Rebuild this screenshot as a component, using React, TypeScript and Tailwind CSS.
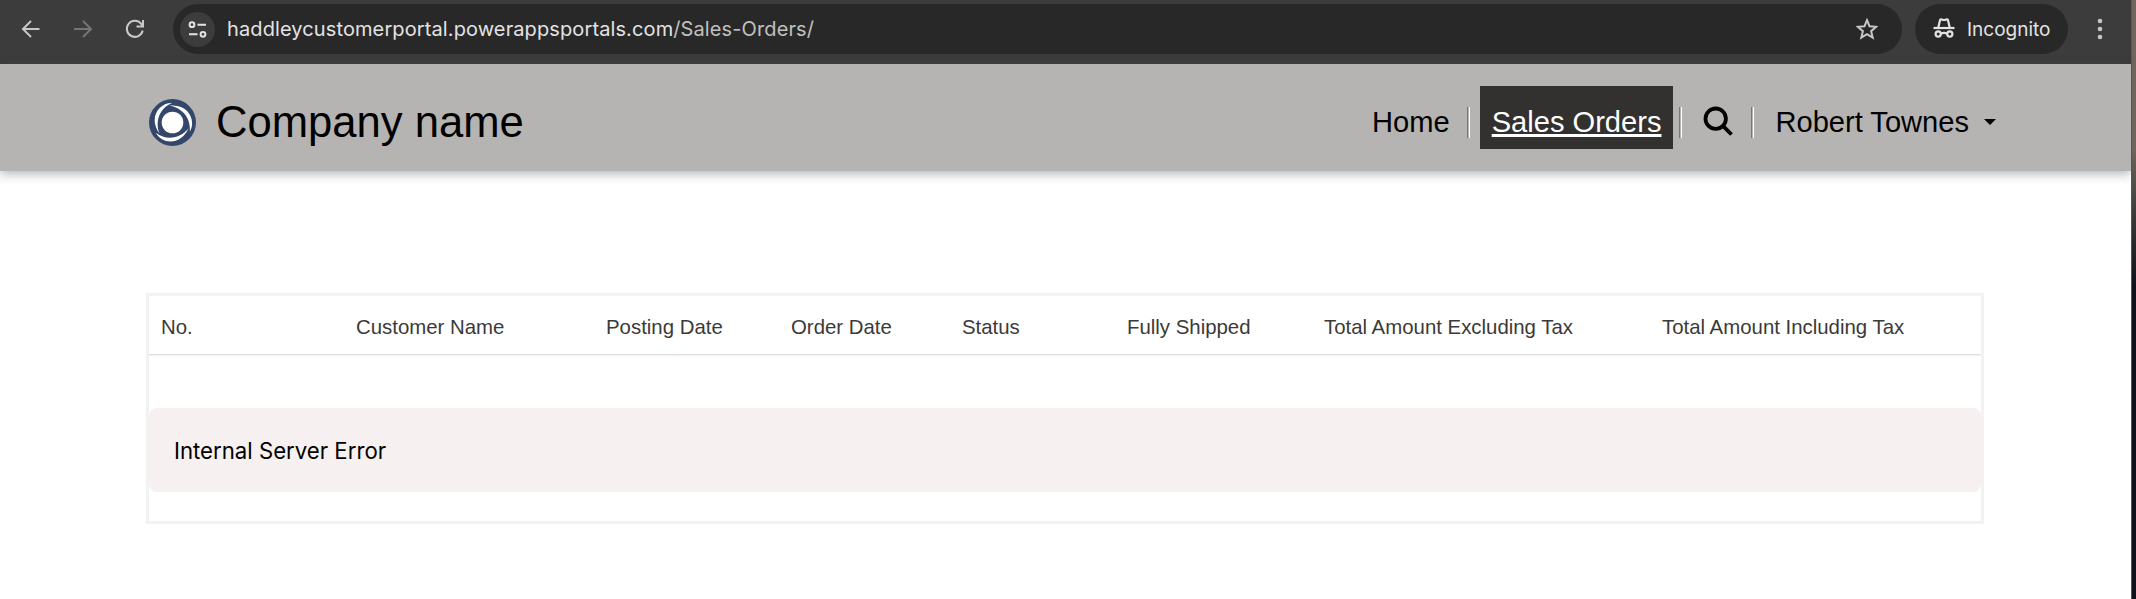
import React from "react";

const columns = [
  { label: "No.", width: "w-[195px]" },
  { label: "Customer Name", width: "w-[250px]" },
  { label: "Posting Date", width: "w-[185px]" },
  { label: "Order Date", width: "w-[171px]" },
  { label: "Status", width: "w-[165px]" },
  { label: "Fully Shipped", width: "w-[197px]" },
  { label: "Total Amount Excluding Tax", width: "w-[338px]" },
  { label: "Total Amount Including Tax", width: "flex-1" },
];

function Toolbar() {
  return (
    <div className="flex h-16 shrink-0 items-start bg-[#3c3c3c] pt-1 font-['Inter',sans-serif]">
      <div className="flex h-[50px] w-[173px] shrink-0 items-center pl-[21px]">
        <svg width="20" height="20" viewBox="0 0 20 20" fill="none" stroke="#c7c7c7" strokeWidth="2">
          <path d="M18.5 10H2.5M10 2L2 10l8 8" />
        </svg>
        <svg className="ml-8" width="20" height="20" viewBox="0 0 20 20" fill="none" stroke="#757575" strokeWidth="2">
          <path d="M1 10h16.5M10 2l8 8-8 8" />
        </svg>
        <svg className="ml-8" width="20" height="20" viewBox="0 0 20 20" fill="none" stroke="#c7c7c7" strokeWidth="2">
          <path d="M17.7 11.5A8 8 0 1 1 16.4 5.2L18 7M18 1v6.500h-6.500" />
        </svg>
      </div>
      <div className="flex h-[50px] w-[1729px] shrink-0 items-center rounded-full bg-[#282828] pl-[7px] pr-6">
        <div className="flex size-[35px] items-center justify-center rounded-full bg-[#3c3c3c]">
          <svg width="19" height="17" viewBox="0 0 19 17" fill="none" stroke="#e3e3e3" strokeWidth="2">
            <circle cx="4" cy="3.7" r="2.4" />
            <path d="M9.5 3.7H18M1 13.3h8.5" />
            <circle cx="15" cy="13.3" r="2.4" />
          </svg>
        </div>
        <div className="ml-3 whitespace-nowrap text-[20px] leading-none tracking-[0.11px] text-[#e3e3e3]">
          haddleycustomerportal.powerappsportals.com<span className="text-[#c0c0c0]">/Sales-Orders/</span>
        </div>
        <svg className="ml-auto" width="22" height="22" viewBox="0 0 22 22" fill="none" stroke="#c7c7c7" strokeWidth="2">
          <path d="M11 2.200l2.500 6 6.700.55-5.100 4.400 1.600 6.450L11 16.200l-5.700 3.400 1.600-6.450L1.800 8.750l6.700-.55z" />
        </svg>
      </div>
      <div className="ml-[13px] flex h-[50px] w-[153px] shrink-0 items-center rounded-full bg-[#282828] pl-[18px]">
        <svg className="-mt-0.5" width="22" height="20" viewBox="0 0 22 20" fill="none" stroke="#e3e3e3" strokeWidth="2.2">
          <path d="M.5 10h21" />
          <path d="M5.3 9.5L7 2.2c.2-.8.8-1.1 1.500-.8l1.600.6h1.800l1.600-.6c.7-.3 1.300 0 1.500.8l1.700 7.300" />
          <circle cx="5.200" cy="16" r="2.600" />
          <circle cx="16.800" cy="16" r="2.600" />
          <path d="M8 15.600q3-1.600 6 0" />
        </svg>
        <span className="ml-3 text-[19px] leading-none text-[#e3e3e3]">Incognito</span>
      </div>
      <svg className="ml-[29px] mt-[14px]" width="6" height="22" viewBox="0 0 6 22" fill="#c7c7c7">
        <circle cx="3" cy="3" r="2.3" />
        <circle cx="3" cy="11" r="2.3" />
        <circle cx="3" cy="19" r="2.3" />
      </svg>
    </div>
  );
}

function Logo() {
  return (
    <svg width="47" height="47" viewBox="0 0 47 47">
      <circle cx="23.5" cy="23.5" r="23.5" fill="#35466b" />
      <circle cx="23.5" cy="23.5" r="10.8" fill="#fff" />
      {["rotate(0 23.5 23.5)", "rotate(120 23.5 23.5)", "rotate(240 23.5 23.5)"].map((t) => (
        <path key={t} transform={t} fill="#fff" d="M23 4C10 3.500 -1 19 10.500 34.500C6 24 9.500 9.500 23 4z" />
      ))}
    </svg>
  );
}

function Divider() {
  return <div className="h-[31px] w-[3px] border-l border-r border-l-[#777] border-r-white bg-[#b5b4b2]" />;
}

function Header() {
  return (
    <header className="relative flex h-[107px] shrink-0 items-start bg-[#b5b4b2] pl-[149px] text-black shadow-[0_3px_10px_rgba(60,70,80,0.4)]">
      <div className="mt-[35px]">
        <Logo />
      </div>
      <div className="ml-5 mt-[33px] whitespace-nowrap text-[43.6px] leading-[50px]">Company name</div>
      <nav className="ml-auto mr-[135px] mt-[22px] flex h-[64px] items-start whitespace-nowrap text-[29.1px] leading-[31px]">
        <span className="mt-[21px]">Home</span>
        <div className="ml-[17px] mt-[21px]"><Divider /></div>
        <span className="ml-[10px] h-[63px] bg-[#323130] px-3 pt-[21px] text-white underline decoration-[3px] underline-offset-[2px] [text-decoration-skip-ink:none]">
          Sales Orders
        </span>
        <div className="ml-[6px] mt-[21px]"><Divider /></div>
        <svg className="ml-[21px] mt-[20px]" width="30" height="30" viewBox="0 0 30 30" fill="none" stroke="#000" strokeWidth="3.8">
          <circle cx="12.7" cy="12.7" r="10.2" />
          <path d="M19.700 19.700L28.500 28.500" />
        </svg>
        <div className="ml-[18px] mt-[21px]"><Divider /></div>
        <span className="ml-[21px] mt-[21px]">Robert Townes</span>
        <svg className="ml-[15px] mt-[33px]" width="12" height="6" viewBox="0 0 12 6"><path d="M0 0h12L6 6z" /></svg>
      </nav>
    </header>
  );
}

export default function App() {
  return (
    <div className="flex h-[599px] w-[2136px] overflow-hidden bg-white font-['Liberation_Sans',Arial,sans-serif]">
      <div className="flex w-[2131px] flex-col overflow-hidden bg-white">
        <Toolbar />
        <Header />
        <main className="ml-[146px] mt-[122px] h-[231px] w-[1838px] border-3 border-[#f2f2f2]">
          <div className="flex h-[59px] items-center border-b border-[#dedfe5] pl-3 pt-1 text-[20.4px] text-[#3b3a39] shadow-[0_1px_0_#f0f1f5]">
            {columns.map((c) => (
              <div key={c.label} className={`${c.width} shrink-0 whitespace-nowrap`}>{c.label}</div>
            ))}
          </div>
          <div className="mt-[53px] flex h-[84px] items-center rounded-lg bg-[#f6f0f0] pl-[25px] pt-0.5 font-['Inter',sans-serif] text-[22.2px] text-black">
            Internal Server Error
          </div>
        </main>
      </div>
      <div className="flex-1 border-l border-[#555] bg-gradient-to-b from-[#6e655b] from-25% to-[#0d1218] to-48%" />
    </div>
  );
}
